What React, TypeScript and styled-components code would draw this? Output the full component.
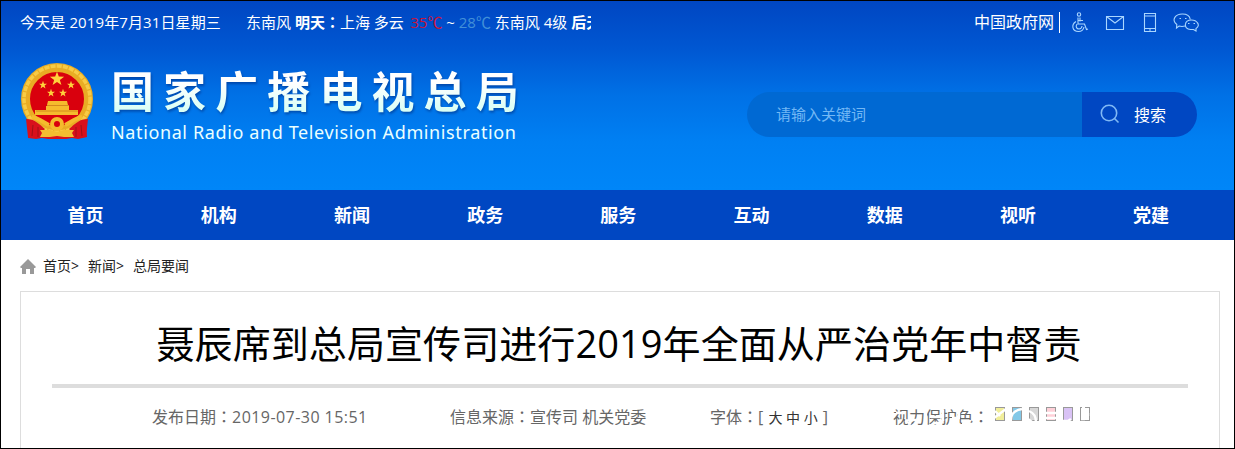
import { FC } from 'react';
import styled, { createGlobalStyle } from 'styled-components';

const GlobalStyle = createGlobalStyle`
  * {
    box-sizing: border-box;
  }

  body {
    margin: 0;
    overflow: hidden;
    font-family: 'Open Sans', 'Noto Sans CJK SC', sans-serif;
    white-space: nowrap;
  }
`;

const Page = styled.div`
  display: flex;
  flex-direction: column;
  width: 1235px;
  height: 449px;
  overflow: hidden;
  border: 1px solid #000;
  background: #fff;
`;

const Header = styled.header`
  height: 189px;
  flex-shrink: 0;
  background: linear-gradient(#0046c2 0%, #0057d2 25%, #0071e6 50%, #0080f3 75%, #0086f8 100%);
  color: #fff;
`;

const TopBar = styled.div`
  display: flex;
  align-items: center;
  height: 42px;
  padding: 0 35px 0 19px;
  font-size: 15px;
`;

const Today = styled.span`
  width: 226px;
  margin-top: -2px;
  letter-spacing: 0.12px;
`;

const Weather = styled.div`
  width: 345px;
  margin-top: -2px;
  overflow: hidden;
`;

// the TC face centres the full-width colon
const Colon = styled.span`
  font-family: 'Noto Sans CJK TC', sans-serif;
`;

const Temperature = styled.span<{ $color: string }>`
  color: ${({ $color }) => $color};
`;

const GovLink = styled.a`
  height: 21px;
  margin-left: auto;
  padding-right: 5px;
  border-right: 1px solid #fff;
  font-size: 16px;
  line-height: 21px;
`;

const Tools = styled.div`
  display: flex;
  width: 139px;
  height: 22px;
  color: #a9d6ff;

  svg {
    fill: none;
    stroke: currentColor;
    stroke-width: 1.1;
  }
`;

const Brand = styled.div`
  display: flex;
  justify-content: space-between;
  height: 100px;
  padding: 18px 37px 0 18px;
`;

const Logo = styled.div`
  display: flex;
`;

const LogoText = styled.div`
  margin-left: 16px;
`;

const LogoTitle = styled.h1`
  height: 62px;
  margin: 0;
  background: linear-gradient(#fff 35%, #d9fff5 80%);
  background-clip: text;
  color: transparent;
  filter: drop-shadow(1px 2px 1px rgba(0, 40, 120, 0.5));
  font-size: 43px;
  font-weight: 700;
  line-height: 62px;
  letter-spacing: 9.1px;
`;

const LogoSubtitle = styled.div`
  margin-top: -4px;
  color: #eaffff;
  font-family: 'Noto Sans', sans-serif;
  font-size: 18px;
  line-height: 26px;
  letter-spacing: 0.62px;
`;

const Search = styled.form`
  display: flex;
  width: 450px;
  height: 45px;
  margin-top: 31px;
  overflow: hidden;
  border-radius: 23px;
`;

const SearchInput = styled.div`
  width: 335px;
  padding-left: 29px;
  background: #0069d3;
  color: #73b8f5;
  font-size: 15px;
  line-height: 45px;
`;

const SearchButton = styled.button`
  display: flex;
  align-items: center;
  width: 115px;
  padding: 0 0 1px 18px;
  border: 0;
  background: #0047c2;
  color: #fff;
  font: inherit;
  font-size: 16px;

  svg {
    margin-right: 14px;
  }
`;

const Nav = styled.nav`
  display: flex;
  flex-shrink: 0;
  height: 50px;
  padding-left: 18px;
  background: #0047c2;
`;

const NavItem = styled.a`
  width: 133.2px;
  color: #fff;
  font-size: 18px;
  font-weight: 700;
  line-height: 50px;
  text-align: center;
`;

const Breadcrumbs = styled.div`
  display: flex;
  align-items: center;
  flex-shrink: 0;
  height: 51px;
  padding: 0 0 2px 19px;
  color: #222;
  font-size: 14px;

  svg {
    margin: 4px 7px 0 0;
  }
`;

const Crumb = styled.span`
  width: 45px;
`;

const Article = styled.article`
  width: 1200px;
  height: 170px;
  margin-left: 19px;
  padding: 0 31px;
  border: 1px solid #ddd;
  border-bottom: 0;
`;

const Title = styled.h2`
  height: 96px;
  margin: 0;
  padding-right: 2px;
  border-bottom: 4px solid #ddd;
  color: #000;
  font-size: 38px;
  font-weight: 400;
  line-height: 102px;
  letter-spacing: 0.08px;
  text-align: center;
`;

const Meta = styled.div`
  display: flex;
  align-items: center;
  height: 56px;
  padding-left: 100px;
  color: #666;
  font-size: 16px;
`;

const MetaItem = styled.div<{ $width: number }>`
  width: ${({ $width }) => $width}px;
`;

const PublishedAt = styled.span`
  letter-spacing: 0.45px;
`;

const Sizes = styled.span`
  margin: 0 1px;
  color: #333;
  font-size: 14px;
`;

const VisionCare = styled.div`
  position: relative;
  display: flex;
  align-items: center;
`;

const Watermark = styled.svg`
  position: absolute;
  top: -3px;
  left: 0;
  fill: none;
  stroke: #fff;
  stroke-width: 2.4;
`;

const Swatches = styled.div`
  display: flex;
  gap: 7px;
  margin-top: -4px;
`;

const Swatch = styled.span<{ $color: string }>`
  width: 10px;
  height: 14px;
  border: 1px solid #999;
  background: ${({ $color }) => $color};
`;

const EmblemStar: FC<{ x: number; y: number; r: number }> = ({ x, y, r }) => (
  <path
    transform={`translate(${x} ${y}) scale(${r})`}
    d='M0-1 .24-.32.95-.31.38.12.59.81 0 .4-.59.81-.38.12-.95-.31-.24-.32Z'
    fill='#ffd23c'
  />
);

const Emblem: FC = () => (
  <svg width='76' height='80' viewBox='0 0 76 80'>
    <path d='M11 54 9 77l8 1 6-1 6 1h18l6-1 6 1 9-2-2-22Z' fill='#d8101c' />
    <circle cx='38' cy='38' r='31.5' fill='#d9000d' stroke='#e9ac24' strokeWidth='9' />
    <circle cx='38' cy='38' r='33' fill='none' stroke='#f8cb45' strokeWidth='3.5' strokeDasharray='5 1.2' />
    <EmblemStar x={38} y={18} r={7.5} />
    <EmblemStar x={24} y={24} r={4.2} />
    <EmblemStar x={52} y={24} r={4.2} />
    <EmblemStar x={32} y={32} r={4.2} />
    <EmblemStar x={44} y={32} r={4.2} />
    <path d='M29 40h19l1 4H28Zm-2 5h23v4h9v5H16v-5h11Z' fill='#f5bb2d' />
    <path d='M28 44.5h22M17 50h42' stroke='#d48a1c' />
    <path d='M7 58c9 0 13 5 19 10l-9 9-8-1Zm62 0c-9 0-13 5-19 10l9 9 8-1Z' fill='#d8101c' />
    <path d='m14 64-1 11m6-9v10m43-12 1 11m-6-9v10' stroke='#a01016' />
    <path d='M13 56c7 1 12 6 17 8m33-8c-7 1-12 6-17 8' fill='none' stroke='#f5bb2d' strokeWidth='4' />
    <circle cx='38' cy='63' r='5' fill='#d9000d' stroke='#f5bb2d' strokeWidth='4' />
    <path d='M21 69h10l7 2 7-2h10l-2 3 2 4H45l-7-1-7 1H21l2-4Z' fill='#f4bd30' />
  </svg>
);

const NAV_ITEMS = ['首页', '机构', '新闻', '政务', '服务', '互动', '数据', '视听', '党建'];
const SWATCH_COLORS = ['#f1ee9a', '#83c8e7', '#d7d7d7', '#ffd0d8', '#d9c2f5', '#fff'];

const App: FC = () => (
  <>
    <GlobalStyle />
    <Page>
      <Header>
        <TopBar>
          <Today>今天是 2019年7月31日星期三</Today>
          <Weather>
            东南风{' '}
            <b>
              明天<Colon>：</Colon>
            </b>
            上海 多云&thinsp; <Temperature $color='#c8143c'>35℃</Temperature> ~{' '}
            <Temperature $color='#4290d8'>28℃</Temperature> 东南风 4级 <b>后天</b>
          </Weather>
          <GovLink>中国政府网</GovLink>
          <Tools>
            <svg width='139' height='22' viewBox='0 0 139 22'>
              <circle cx='19' cy='3.5' r='1.7' />
              <path d='M18 6.5V13h6.5l2 5.5 1.5-.5M18 9.500h5M20 6.500v4M16 10.500c-5 3-4 10 2.500 10 3 0 5-2 5.500-4.500M17 13c-2 3 0 5 2 5s3-2 3-3' />
              <path d='M46.500 5.500h17v13h-17Zm0 0 8.500 6.500 8.500-6.500' />
              <path d='M84.500 2.500h11v18h-11ZM84.500 5h11m-11 12.500h11M89 19h2' />
              <path d='M125 15c-2 .6-4 .6-6 0l-2.500 2 .3-3.500c-6-5-1-10.500 5.500-10.500 4.500 0 7.500 2.300 8 5.500' />
              <path d='M131.500 9c-7.500 0-8.500 9-1 9.500h3l2.500 1.500v-2.500c5-3 1-8.500-4.500-8.500Z' />
              <path d='M119.500 7.500h1.500m4 0h1.500m1.500 5h1.500m4 0h1.500' />
            </svg>
          </Tools>
        </TopBar>
        <Brand>
          <Logo>
            <Emblem />
            <LogoText>
              <LogoTitle>国家广播电视总局</LogoTitle>
              <LogoSubtitle>National Radio and Television Administration</LogoSubtitle>
            </LogoText>
          </Logo>
          <Search>
            <SearchInput>请输入关键词</SearchInput>
            <SearchButton type='button'>
              <svg width='20' height='20' fill='none' stroke='#80b9f5' strokeWidth='1.6'>
                <circle cx='9' cy='9' r='7.7' />
                <path d='m14.5 14.5 4 4' />
              </svg>
              搜索
            </SearchButton>
          </Search>
        </Brand>
      </Header>
      <Nav>
        {NAV_ITEMS.map((item) => (
          <NavItem key={item}>{item}</NavItem>
        ))}
      </Nav>
      <Breadcrumbs>
        <svg width='16' height='16' fill='#999'>
          <path d='m8 0 8 8-1 1h-1v6h-4v-5H6v5H2V9H1L0 8Z' />
        </svg>
        <Crumb>首页&gt;</Crumb>
        <Crumb>新闻&gt;</Crumb>
        <Crumb>总局要闻</Crumb>
      </Breadcrumbs>
      <Article>
        <Title>聂辰席到总局宣传司进行2019年全面从严治党年中督责</Title>
        <Meta>
          <MetaItem $width={298}>
            发布日期<Colon>：</Colon>
            <PublishedAt>2019-07-30 15:51</PublishedAt>
          </MetaItem>
          <MetaItem $width={260}>
            信息来源<Colon>：</Colon>宣传司 机关党委
          </MetaItem>
          <MetaItem $width={183}>
            字体<Colon>：</Colon>[ <Sizes>大 中 小</Sizes> ]
          </MetaItem>
          <VisionCare>
            <MetaItem $width={102}>
              视力保护色<Colon>：</Colon>
            </MetaItem>
            <Swatches>
              {SWATCH_COLORS.map((color) => (
                <Swatch key={color} $color={color} />
              ))}
            </Swatches>
            <Watermark width='204' height='28' viewBox='0 0 204 28'>
              <path d='M3 12h9M12 20l6 3M18 19h10M33 10v12M38 16h10M50 9v11M41 22h8M59 17h8M69 23h11M66 10v6' />
              <path d='m101 17 12-9M102 10l5 5M118 19c0-6 4-10 11-11M136 10c5 2 7 6 7 11M135 18l4 3' />
              <path d='M152 12h12M153 17h12M168 20h7l3-2M185 8v3m0 5v3m10-7v3m-6-9h3m-4 15h4' />
            </Watermark>
          </VisionCare>
        </Meta>
      </Article>
    </Page>
  </>
);

export default App;
